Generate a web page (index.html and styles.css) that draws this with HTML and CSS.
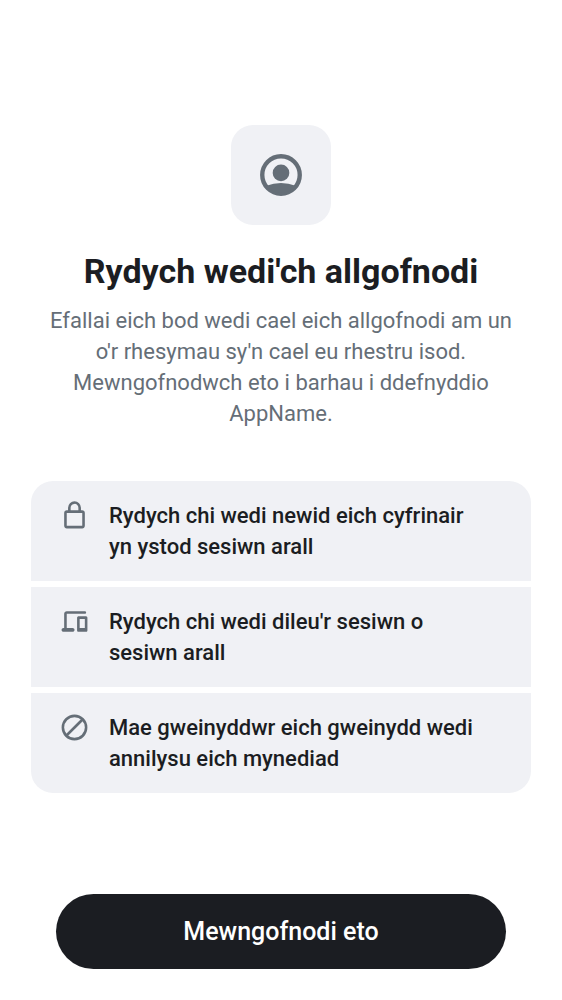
FILE: index.html
```html
<!DOCTYPE html>
<html lang="cy">
<head>
<meta charset="utf-8">
<meta name="viewport" content="width=device-width, initial-scale=1">
<title>Rydych wedi'ch allgofnodi</title>
<link rel="stylesheet" href="styles.css">
</head>
<body>
<main class="page">
  <header class="header">
    <div class="tile">
      <svg class="tile-icon" viewBox="0 0 24 24" aria-hidden="true">
        <circle cx="12" cy="12" r="9" fill="none" stroke="currentColor" stroke-width="2.1"/>
        <circle cx="12" cy="11" r="4" fill="currentColor"/>
        <path fill="currentColor" d="M5 17.2Q8.400 15.800 12 15.800T19 17.200A9 9 0 0 1 5 17.200z"/>
      </svg>
    </div>
    <h1 class="title">Rydych wedi'ch allgofnodi</h1>
    <p class="subtitle">Efallai eich bod wedi cael eich allgofnodi am un o'r rhesymau sy'n cael eu rhestru isod. Mewngofnodwch eto i barhau i ddefnyddio AppName.</p>
  </header>
  <ul class="reasons">
    <li class="reason">
      <svg class="reason-icon" viewBox="0 0 24 24" fill="currentColor" aria-hidden="true">
        <path d="M6 22q-.825 0-1.412-.587A1.930 1.930 0 0 1 4 20V10q0-.825.588-1.412A1.930 1.930 0 0 1 6 8h1V6q0-2.075 1.463-3.537T12 1t3.538 1.463T17 6v2h1q.824 0 1.413.588Q20 9.175 20 10v10q0 .824-.587 1.413A1.930 1.930 0 0 1 18 22zm0-2h12V10H6zM9 8h6V6q0-1.250-.875-2.125A2.900 2.900 0 0 0 12 3q-1.250 0-2.125.875A2.900 2.900 0 0 0 9 6z"/>
      </svg>
      <span class="reason-text">Rydych chi wedi newid eich cyfrinair yn ystod sesiwn arall</span>
    </li>
    <li class="reason">
      <svg class="reason-icon" viewBox="0 0 24 24" fill="currentColor" aria-hidden="true">
        <path d="M3.500 20q-.625 0-1.062-.438A1.450 1.450 0 0 1 2 18.500q0-.625.438-1.062A1.450 1.450 0 0 1 3.500 17H4V6q0-.824.588-1.412A1.930 1.930 0 0 1 6 4h14a.970.970 0 0 1 .712.288Q21 4.575 21 5q0 .424-.288.713A.970.970 0 0 1 20 6H6v11h4.500q.624 0 1.063.438.437.437.437 1.062 0 .624-.437 1.063A1.450 1.450 0 0 1 10.500 20z"/>
        <path d="M15 20a.970.970 0 0 1-.713-.288A.970.970 0 0 1 14 19V9q0-.424.287-.713A.970.970 0 0 1 15 8h6q.424 0 .712.287.288.288.288.713v10q0 .424-.288.712A.970.970 0 0 1 21 20zm1-3h4v-7h-4z"/>
      </svg>
      <span class="reason-text">Rydych chi wedi dileu'r sesiwn o sesiwn arall</span>
    </li>
    <li class="reason">
      <svg class="reason-icon" viewBox="0 0 24 24" fill="none" stroke="currentColor" stroke-width="2" aria-hidden="true">
        <circle cx="12" cy="12" r="9"/>
        <path d="M5.600 18.400 18.400 5.600"/>
      </svg>
      <span class="reason-text">Mae gweinyddwr eich gweinydd wedi annilysu eich mynediad</span>
    </li>
  </ul>
  <button class="action" type="button">Mewngofnodi eto</button>
</main>
</body>
</html>
```
FILE: styles.css
```css
* {
  box-sizing: border-box;
}

body {
  margin: 0;
  background: #fff;
  color: #1b1d22;
  font-family: Roboto, "Liberation Sans", sans-serif;
}

.page {
  display: flex;
  flex-direction: column;
  min-height: 100vh;
  padding: 125px 31px 31px;
}

.header {
  display: flex;
  flex-direction: column;
  align-items: center;
  text-align: center;
}

.tile {
  display: grid;
  place-items: center;
  width: 100px;
  height: 100px;
  border-radius: 22px;
  background: #f0f1f5;
  color: #656e77;
}

.tile-icon {
  width: 50px;
  height: 50px;
}

.title {
  margin: 24px 0 12px;
  font-size: 34px;
  font-weight: 700;
  line-height: 44px;
}

.subtitle {
  margin: 0;
  padding: 0 10px;
  color: #656e77;
  font-size: 22px;
  line-height: 31px;
}

.reasons {
  display: flex;
  flex-direction: column;
  gap: 6px;
  margin: 52px 0 0;
  padding: 0;
  overflow: hidden;
  border-radius: 22px;
  list-style: none;
}

.reason {
  display: flex;
  align-items: flex-start;
  gap: 19px;
  padding: 19px 46px 19px 28px;
  background: #f0f1f5;
}

.reason-icon {
  flex: none;
  width: 31px;
  height: 31px;
  color: #656e77;
}

.reason-text {
  flex: 1;
  font-size: 22px;
  font-weight: 500;
  line-height: 31px;
}

.action {
  margin: auto 25px 0;
  padding: 22px;
  border: 0;
  border-radius: 38px;
  background: #1b1d22;
  color: #fff;
  font-family: inherit;
  font-size: 25px;
  font-weight: 500;
  line-height: 31px;
}
```
